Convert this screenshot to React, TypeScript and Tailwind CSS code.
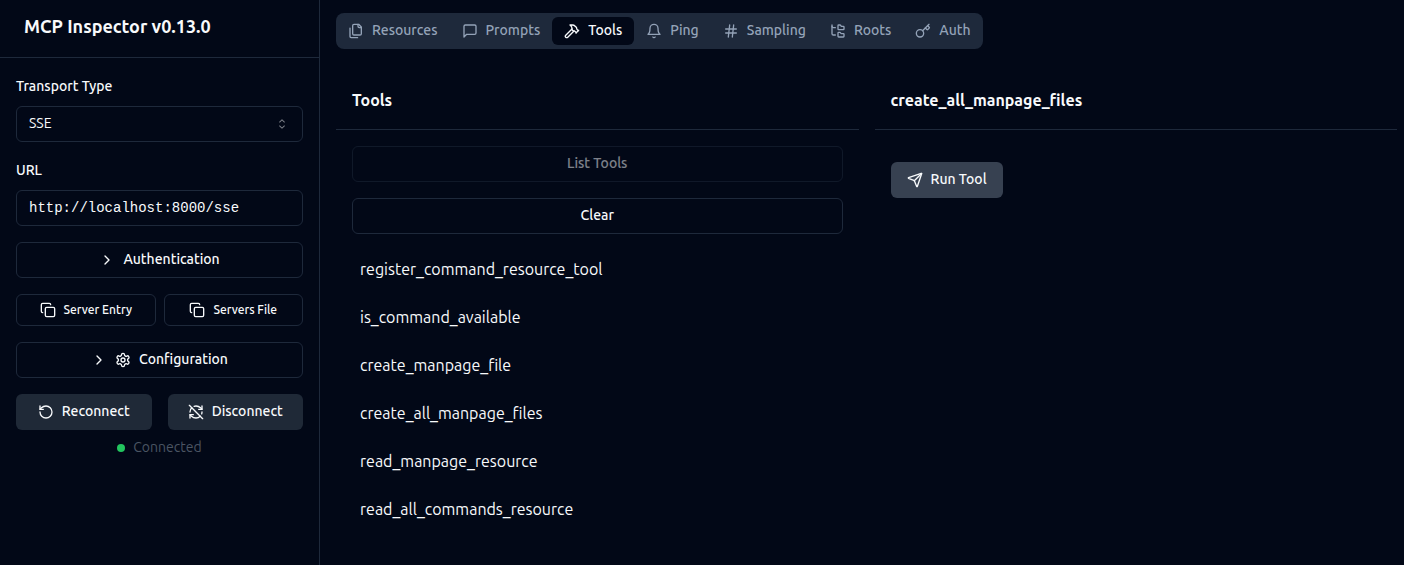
import { useState, type ComponentType, type ReactNode } from "react";
import {
  ChevronRight,
  Copy,
  FolderTree,
  Hammer,
  Hash,
  Key,
  RefreshCwOff,
  RotateCcw,
  Send,
} from "lucide-react";

type IconProps = { className?: string };

function StrokeIcon({ className, children }: IconProps & { children: ReactNode }) {
  return (
    <svg
      viewBox="0 0 24 24"
      fill="none"
      stroke="currentColor"
      strokeWidth="2"
      strokeLinecap="round"
      strokeLinejoin="round"
      aria-hidden="true"
      className={className}
    >
      {children}
    </svg>
  );
}

function Files(props: IconProps) {
  return (
    <StrokeIcon {...props}>
      <path d="M20 7h-3a2 2 0 0 1-2-2V2" />
      <path d="M9 18a2 2 0 0 1-2-2V4a2 2 0 0 1 2-2h7l4 4v10a2 2 0 0 1-2 2Z" />
      <path d="M3 7.6v12.8A1.6 1.6 0 0 0 4.6 22h9.8" />
    </StrokeIcon>
  );
}

function Message(props: IconProps) {
  return (
    <StrokeIcon {...props}>
      <path d="M21 15a2 2 0 0 1-2 2H7l-4 4V5a2 2 0 0 1 2-2h14a2 2 0 0 1 2 2z" />
    </StrokeIcon>
  );
}

function Bell(props: IconProps) {
  return (
    <StrokeIcon {...props}>
      <path d="M6 8a6 6 0 0 1 12 0c0 7 3 9 3 9H3s3-2 3-9" />
      <path d="M10.3 21a1.94 1.94 0 0 0 3.4 0" />
    </StrokeIcon>
  );
}

function Settings(props: IconProps) {
  return (
    <StrokeIcon {...props}>
      <path d="M12.22 2h-.44a2 2 0 0 0-2 2v.18a2 2 0 0 1-1 1.73l-.43.25a2 2 0 0 1-2 0l-.15-.08a2 2 0 0 0-2.73.73l-.22.38a2 2 0 0 0 .73 2.73l.15.1a2 2 0 0 1 1 1.72v.51a2 2 0 0 1-1 1.74l-.15.09a2 2 0 0 0-.73 2.73l.22.38a2 2 0 0 0 2.73.73l.15-.08a2 2 0 0 1 2 0l.43.25a2 2 0 0 1 1 1.73V20a2 2 0 0 0 2 2h.44a2 2 0 0 0 2-2v-.18a2 2 0 0 1 1-1.73l.43-.25a2 2 0 0 1 2 0l.15.08a2 2 0 0 0 2.73-.73l.22-.39a2 2 0 0 0-.73-2.73l-.15-.08a2 2 0 0 1-1-1.74v-.5a2 2 0 0 1 1-1.74l.15-.09a2 2 0 0 0 .73-2.73l-.22-.38a2 2 0 0 0-2.73-.73l-.15.08a2 2 0 0 1-2 0l-.43-.25a2 2 0 0 1-1-1.73V4a2 2 0 0 0-2-2z" />
      <circle cx="12" cy="12" r="3" />
    </StrokeIcon>
  );
}

function CaretSort() {
  return (
    <svg
      viewBox="0 0 15 15"
      fill="currentColor"
      aria-hidden="true"
      className="pointer-events-none absolute top-1/2 right-[13px] size-4 -translate-y-1/2 opacity-50"
    >
      <path d="M4.93179 5.43179C4.75605 5.60753 4.75605 5.89245 4.93179 6.06819C5.10753 6.24392 5.39245 6.24392 5.56819 6.06819L7.49999 4.13638L9.43179 6.06819C9.60753 6.24392 9.89245 6.24392 10.0682 6.06819C10.2439 5.89245 10.2439 5.60753 10.0682 5.43179L7.81819 3.18179C7.73379 3.0974 7.61933 3.04999 7.49999 3.04999C7.38064 3.04999 7.26618 3.0974 7.18179 3.18179L4.93179 5.43179ZM10.0682 9.56819C10.2439 9.39245 10.2439 9.10753 10.0682 8.93179C9.89245 8.75606 9.60753 8.75606 9.43179 8.93179L7.49999 10.8636L5.56819 8.93179C5.39245 8.75606 5.10753 8.75606 4.93179 8.93179C4.75605 9.10753 4.75605 9.39245 4.93179 9.56819L7.18179 11.8182C7.35753 11.9939 7.64245 11.9939 7.81819 11.8182L10.0682 9.56819Z" />
    </svg>
  );
}

const tabs: { label: string; icon: ComponentType<IconProps> }[] = [
  { label: "Resources", icon: Files },
  { label: "Prompts", icon: Message },
  { label: "Tools", icon: Hammer },
  { label: "Ping", icon: Bell },
  { label: "Sampling", icon: Hash },
  { label: "Roots", icon: FolderTree },
  { label: "Auth", icon: Key },
];

const tools = [
  "register_command_resource_tool",
  "is_command_available",
  "create_manpage_file",
  "create_all_manpage_files",
  "read_manpage_resource",
  "read_all_commands_resource",
];

const outline =
  "flex items-center justify-center gap-2 rounded-md border border-[#1e293b] font-medium hover:bg-slate-800 disabled:opacity-50";
const solid = "flex h-9 items-center justify-center gap-2 rounded-md font-medium";

function Caption({ children }: { children: ReactNode }) {
  return <span className="pb-0.5">{children}</span>;
}

function Sidebar() {
  return (
    <aside className="flex w-80 shrink-0 flex-col border-r border-[#1e293b]">
      <header className="border-b border-[#1e293b] px-6 pt-3 pb-[17px]">
        <h1 className="text-lg font-semibold">MCP Inspector v0.13.0</h1>
      </header>
      <div className="flex flex-col gap-4 p-4 text-sm">
        <div className="flex flex-col gap-2">
          <label htmlFor="transport" className="leading-6 font-medium">
            Transport Type
          </label>
          <div className="relative">
            <select
              id="transport"
              defaultValue="SSE"
              className="h-9 w-full appearance-none rounded-md border border-[#1e293b] bg-[#020817] px-3 pb-[3px]"
            >
              <option>STDIO</option>
              <option>SSE</option>
              <option>Streamable HTTP</option>
            </select>
            <CaretSort />
          </div>
        </div>
        <div className="flex flex-col gap-2">
          <label htmlFor="url" className="leading-6 font-medium">
            URL
          </label>
          <input
            id="url"
            defaultValue="http://localhost:8000/sse"
            className="h-9 w-full rounded-md border border-[#1e293b] bg-transparent px-3 font-['Liberation_Mono',monospace]"
          />
        </div>
        <button type="button" className={`${outline} h-9`}>
          <ChevronRight className="size-4" />
          <Caption>Authentication</Caption>
        </button>
        <div className="grid grid-cols-2 gap-2 text-xs">
          <button type="button" className={`${outline} h-8`}>
            <Copy className="size-4" />
            Server Entry
          </button>
          <button type="button" className={`${outline} h-8`}>
            <Copy className="size-4" />
            Servers File
          </button>
        </div>
        <button type="button" className={`${outline} h-9`}>
          <ChevronRight className="size-4" />
          <Settings className="size-4" />
          <Caption>Configuration</Caption>
        </button>
        <div className="flex flex-col gap-[7px]">
          <div className="grid grid-cols-2 gap-4">
            <button type="button" className={`${solid} bg-[#1f2937]`}>
              <RotateCcw className="size-4" />
              <Caption>Reconnect</Caption>
            </button>
            <button type="button" className={`${solid} bg-[#1f2937]`}>
              <RefreshCwOff className="size-4" />
              <Caption>Disconnect</Caption>
            </button>
          </div>
          <div className="flex items-center justify-center gap-2">
            <span className="size-2 rounded-full bg-[#22c55e]" />
            <span className="pb-0.5 text-[#4b5563]">Connected</span>
          </div>
        </div>
      </div>
    </aside>
  );
}

function Panel({ title, children }: { title: string; children: ReactNode }) {
  return (
    <section className="min-w-0">
      <h3 className="border-b border-[#1e293b] px-4 pt-[15px] pb-[17px] font-semibold">{title}</h3>
      <div className="p-4">{children}</div>
    </section>
  );
}

export default function App() {
  const [active, setActive] = useState("Tools");
  const [selected, setSelected] = useState("create_all_manpage_files");

  return (
    <div className="flex min-h-screen bg-[#020817] font-[Ubuntu,'Noto_Sans',sans-serif] text-[#f8fafc]">
      <Sidebar />
      <main className="min-w-0 flex-1 py-[13px] pr-[7px] pl-4">
        <div role="tablist" className="inline-flex h-9 items-center rounded-lg bg-[#1e293b] align-top text-sm font-medium">
          {tabs.map(({ label, icon: Icon }) => (
            <button
              key={label}
              type="button"
              role="tab"
              aria-selected={active === label}
              onClick={() => setActive(label)}
              className={`flex h-7 items-center gap-2 rounded-md px-3 ${
                active === label ? "bg-[#020817] text-[#f8fafc]" : "text-[#94a3b8]"
              }`}
            >
              <Icon className="size-4" />
              <Caption>{label}</Caption>
            </button>
          ))}
        </div>
        <div className="mt-6 grid grid-cols-2 gap-4">
          <Panel title="Tools">
            <div className="flex flex-col gap-4">
              <button type="button" disabled className={`${outline} h-9 text-sm`}>
                <Caption>List Tools</Caption>
              </button>
              <button type="button" className={`${outline} h-9 text-sm`}>
                <Caption>Clear</Caption>
              </button>
              <ul className="flex flex-col gap-2">
                {tools.map((tool) => (
                  <li key={tool}>
                    <button
                      type="button"
                      onClick={() => setSelected(tool)}
                      className="w-full rounded-md px-2 pt-[7px] pb-[9px] text-left hover:bg-slate-800"
                    >
                      {tool}
                    </button>
                  </li>
                ))}
              </ul>
            </div>
          </Panel>
          <Panel title={selected}>
            <button type="button" className={`${solid} mt-4 bg-[#374151] px-4 text-sm`}>
              <Send className="size-4" />
              <Caption>Run Tool</Caption>
            </button>
          </Panel>
        </div>
      </main>
    </div>
  );
}
